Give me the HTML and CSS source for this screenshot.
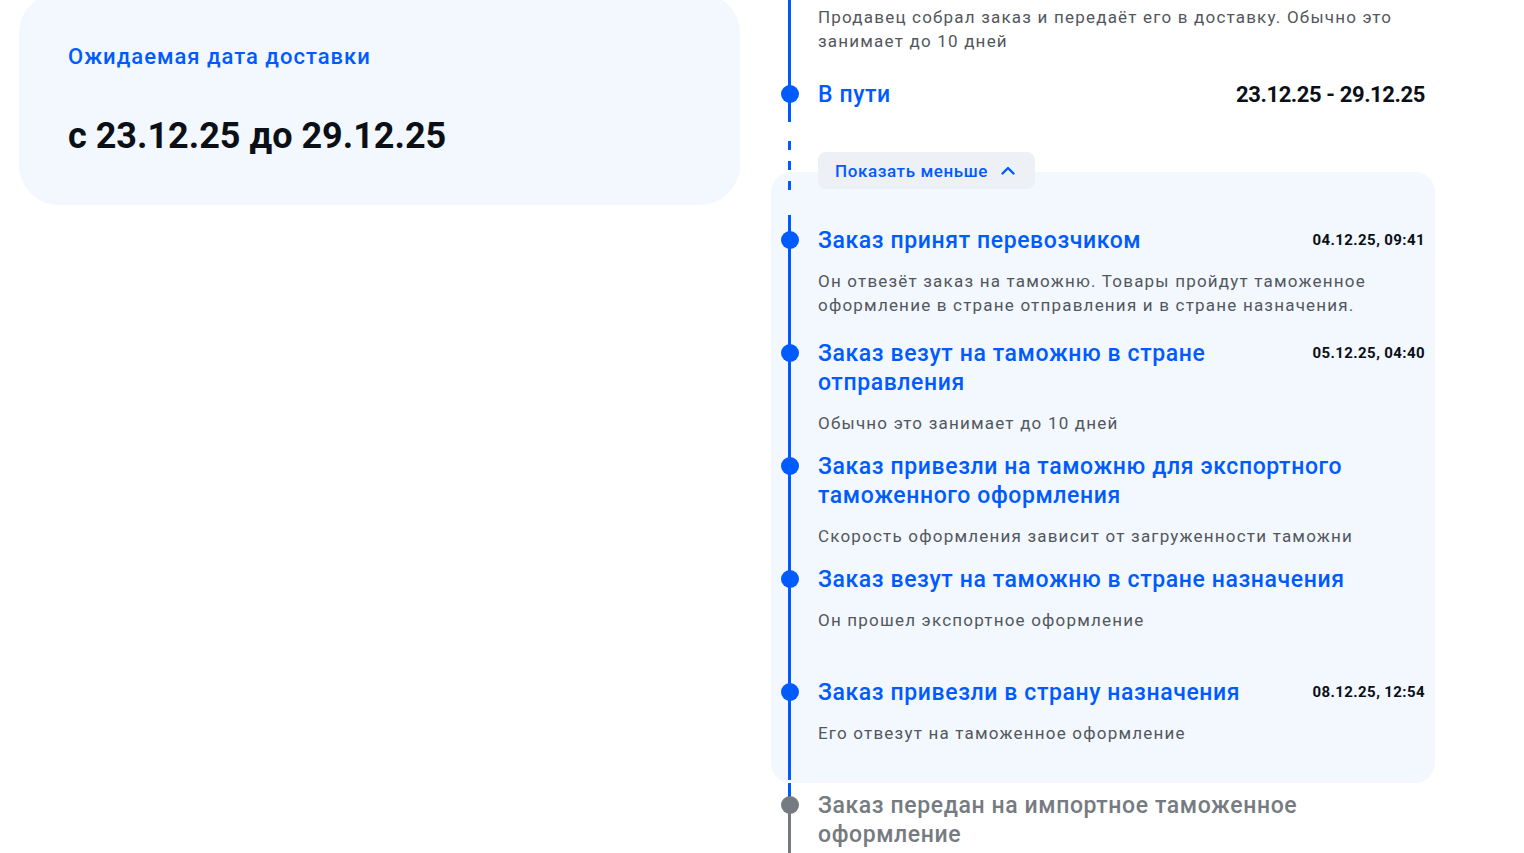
FILE: index.html
```html
<!DOCTYPE html>
<html lang="ru">
<head>
  <meta charset="UTF-8" />
  <title>Отслеживание заказа</title>
  <link rel="stylesheet" href="styles.css">
</head>
<body>
  <div class="page">
    <section class="eta-card">
      <h2 class="eta-label">Ожидаемая дата доставки</h2>
      <div class="eta-range">с 23.12.25 до 29.12.25</div>
    </section>

    <section class="tracking">
      <div class="step step-passed">
        <p class="step-note">Продавец собрал заказ и передаёт его в доставку. Обычно это занимает до 10 дней</p>
      </div>

      <div class="step step-current">
        <div class="step-head">
          <span class="step-title">В пути</span>
          <span class="step-range">23.12.25 - 29.12.25</span>
        </div>
      </div>

      <div class="toggle-row">
        <button class="toggle-btn">
          Показать меньше
          <svg width="14" height="9" viewBox="0 0 14 9"><path d="M1.5 7.5L7 2l5.5 5.5" fill="none" stroke="currentColor" stroke-width="2.4" stroke-linecap="round" stroke-linejoin="round"/></svg>
        </button>
      </div>

      <div class="history">
        <div class="step">
          <div class="step-head">
            <span class="step-title">Заказ принят перевозчиком</span>
            <span class="step-time">04.12.25, 09:41</span>
          </div>
          <p class="step-note">Он отвезёт заказ на таможню. Товары пройдут таможенное оформление в стране отправления и в стране назначения.</p>
        </div>
        <div class="step">
          <div class="step-head">
            <span class="step-title">Заказ везут на таможню в стране отправления</span>
            <span class="step-time">05.12.25, 04:40</span>
          </div>
          <p class="step-note">Обычно это занимает до 10 дней</p>
        </div>
        <div class="step">
          <div class="step-head">
            <span class="step-title">Заказ привезли на таможню для экспортного таможенного оформления</span>
          </div>
          <p class="step-note">Скорость оформления зависит от загруженности таможни</p>
        </div>
        <div class="step">
          <div class="step-head">
            <span class="step-title">Заказ везут на таможню в стране назначения</span>
          </div>
          <p class="step-note">Он прошел экспортное оформление</p>
        </div>
        <div class="step">
          <div class="step-head">
            <span class="step-title">Заказ привезли в страну назначения</span>
            <span class="step-time">08.12.25, 12:54</span>
          </div>
          <p class="step-note">Его отвезут на таможенное оформление</p>
        </div>
      </div>

      <div class="step step-pending">
        <div class="step-head">
          <span class="step-title">Заказ передан на импортное таможенное оформление</span>
        </div>
      </div>
    </section>
  </div>
</body>
</html>
```

FILE: styles.css
```css
:root {
  --blue: #005bff;
  --text: #0a1016;
  --note: #52575d;
  --muted: #767b81;
  --soft-bg: #f3f7fe;
  --btn-bg: #edf0f5;
}

body {
  margin: 0;
  background: #fff;
  font-family: Roboto, "Liberation Sans", sans-serif;
  color: var(--text);
  overflow: hidden;
}

.page {
  display: flex;
  align-items: flex-start;
  gap: 31px;
  padding-left: 19px;
}

/* expected delivery card */
.eta-card {
  width: 721px;
  box-sizing: border-box;
  margin-top: -7px;
  padding: 50px 49px 47px;
  background: var(--soft-bg);
  border-radius: 40px;
}

.eta-label {
  margin: 0;
  font-size: 22px;
  line-height: 28px;
  font-weight: 500;
  letter-spacing: 1px;
  color: var(--blue);
}

.eta-range {
  margin-top: 43px;
  font-size: 36px;
  line-height: 44px;
  font-weight: 700;
}

/* tracking timeline */
.tracking {
  width: 664px;
}

.step {
  position: relative;
  padding-left: 47px;
  padding-right: 10px;
}

.step::before {
  content: '';
  position: absolute;
  left: 17px;
  top: 0;
  bottom: 0;
  width: 3px;
  background: var(--blue);
}

.step-head {
  position: relative;
  display: flex;
  align-items: flex-start;
}

.step-head::before {
  content: '';
  position: absolute;
  left: -37px;
  top: 5px;
  width: 18px;
  height: 18px;
  border-radius: 50%;
  background: var(--blue);
}

.step-title {
  flex: 1;
  font-size: 23px;
  line-height: 29px;
  font-weight: 500;
  letter-spacing: 0.6px;
  color: var(--blue);
}

.step-time {
  margin-left: 20px;
  font-size: 15px;
  line-height: 29px;
  font-weight: 700;
  letter-spacing: 0.4px;
  white-space: nowrap;
}

.step-range {
  margin-left: 20px;
  font-size: 22px;
  line-height: 29px;
  font-weight: 700;
  letter-spacing: -0.4px;
  white-space: nowrap;
}

.step-note {
  margin: 14px 0 0;
  font-size: 17px;
  line-height: 24px;
  letter-spacing: 1.2px;
  color: var(--note);
}

.step-passed {
  padding-top: 5px;
  padding-bottom: 27px;
}

.step-passed .step-note {
  margin-top: 0;
}

.step-current {
  padding-bottom: 13px;
}

.toggle-row {
  position: relative;
  z-index: 2;
  padding: 30px 0 0 47px;
}

.toggle-row::before {
  content: '';
  position: absolute;
  left: 17px;
  top: 19px;
  width: 3px;
  height: 54px;
  background: repeating-linear-gradient(to bottom, var(--blue) 0 9px, transparent 9px 20px);
}

.toggle-btn {
  display: flex;
  align-items: center;
  gap: 13px;
  height: 37px;
  padding: 0 20px 0 17px;
  border: none;
  border-radius: 8px;
  background: var(--btn-bg);
  color: var(--blue);
  font-family: inherit;
  font-size: 17px;
  font-weight: 500;
  letter-spacing: 0.6px;
  cursor: pointer;
}

.history {
  position: relative;
  margin-top: -17px;
  padding: 43px 0 3px;
  background: var(--soft-bg);
  border-radius: 20px;
}

.history .step {
  min-height: 113px;
  box-sizing: border-box;
  padding-top: 11px;
}

.step-pending {
  padding-top: 8px;
  padding-bottom: 20px;
}

.step-pending::before {
  background: linear-gradient(to bottom, var(--blue) 0 14px, var(--muted) 14px);
}

.step-pending .step-head::before {
  background: var(--muted);
}

.step-pending .step-title {
  color: var(--muted);
}
```
